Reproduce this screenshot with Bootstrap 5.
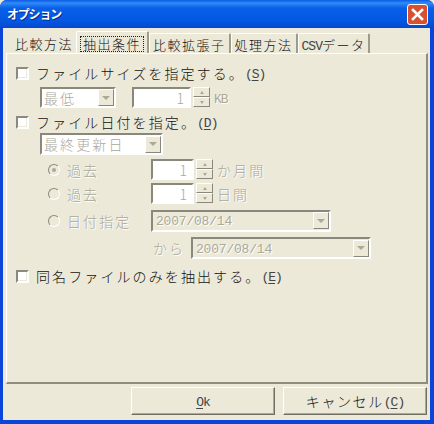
<!DOCTYPE html>
<html lang="ja">
<head>
  <meta charset="UTF-8" />
  <title>オプション</title>
  <link href="https://cdn.jsdelivr.net/npm/bootstrap@5.3.0/dist/css/bootstrap.min.css" rel="stylesheet">
  <style>
    html, body { width: 434px; height: 424px; overflow: hidden; }
    body { background: #ece9d8; font-family: "Noto Sans CJK JP", "Liberation Sans", sans-serif; font-size: 14px; line-height: 16px; color: #111; font-weight: 300; }
    .win { width: 434px; height: 424px; background: #0a44d8; border-radius: 7px 7px 0 0; padding: 0 4px 4px 3px; }
    .win-title { height: 28px; margin: 0 -4px 0 -3px; padding: 0 6px 0 7px; background: linear-gradient(#0a5ae6 0, #2f8cf5 3px, #0a5fe8 8px, #0256e0 22px, #0a45cc 28px); border-radius: 7px 7px 0 0; color: #fff; font-weight: 700; font-size: 12px; letter-spacing: -1.2px; text-shadow: 1px 1px 0 #0a2a90; }
    .win-close { width: 21px; height: 21px; border: 1px solid #fff; border-radius: 3px; background: #d9502e; }
    .win-body { background: #ece9d8; height: 392px; padding: 5px 2px 0 3px; }
    .tab-row { height: 20px; padding-left: 6px; position: relative; z-index: 1; }
    .tab-item { height: 20px; padding: 3px 3px 0 3px; letter-spacing: 1.5px; border-right: 2px solid #9d9b8e; border-top: 1px solid #fff; border-left: 1px solid #fff; white-space: nowrap; border-radius: 2px 2px 0 0; font-size: 13px; }
    .tab-item.first { border: 0; }
    .tab-item.on { height: 22px; margin-top: -2px; padding-top: 4px; background: #ece9d8; position: relative; z-index: 2; }
    .tab-focus { border: 1px dotted #222; padding: 0 2px; display: block; height: 16px; line-height: 14px; }
    .tab-panel { height: 331px; border-top: 1px solid #fff; border-left: 1px solid #fff; border-right: 2px solid #8f8d80; border-bottom: 2px solid #8f8d80; padding: 11px 0 0 9px; }
    .line { letter-spacing: 2.1px; white-space: nowrap; }
    .chk-line { height: 16px; }
    .half { font-family: "Liberation Mono", monospace; font-size: 13px; letter-spacing: -1px; font-weight: 400; padding-top: 4px; color: #444; }
    .off .half { color: #aca899; }
    .date-text { font-family: "Liberation Mono", monospace; font-size: 13px; letter-spacing: -.2px; font-weight: 400; padding-left: 3px; padding-top: 3px; }
    .cb { width: 13px; height: 13px; border: 2px solid; border-color: #8c8a7f #fff #fff #8c8a7f; background: #fff; box-shadow: inset -1px -1px 0 #ece9d8; margin-right: 7px; flex: none; }
    .off { color: #aca899; text-shadow: 1px 1px 0 #fff; }
    .field { height: 21px; border: 2px solid; border-color: #8a887c #fff #fff #8a887c; background: #fff; }
    .field.gray { background: #ece9d8; }
    .combo-btn { width: 16px; height: 17px; background: #ece9d8; border: 1px solid; border-color: #fff #8a887c #8a887c #fff; flex: none; }
    .tri { width: 0; height: 0; border: 4px solid transparent; border-top: 4px solid #aca899; border-bottom: 0; }
    .tri.up { border-top: 0; border-bottom: 3px solid #aca899; border-left-width: 2px; border-right-width: 2px; }
    .tri.dn { border-top-width: 3px; border-left-width: 2px; border-right-width: 2px; }
    .spin { width: 17px; height: 21px; margin-left: 2px; flex: none; }
    .spin-btn { height: 10px; background: #ece9d8; border: 1px solid; border-color: #fff #8a887c #8a887c #fff; }
    .radio-dot { width: 12px; height: 12px; border-radius: 50%; border: 1px solid; border-color: #8a887c #fff #fff #8a887c; margin-right: 7px; flex: none; }
    .radio-dot i { width: 4px; height: 4px; border-radius: 50%; background: #aca899; display: block; }
    .row-size { margin: 6px 0 0 24px; height: 21px; }
    .row-spin { margin-left: 32px; height: 21px; }
    .win-foot { padding: 3px 1px 0 0; }
    .push { width: 144px; height: 28px; border: 1px solid; border-color: #fff #716f64 #716f64 #fff; box-shadow: inset -1px -1px 0 #aca899; letter-spacing: 1.6px; }
    u { text-underline-offset: 2px; }
  </style>
</head>
<body>
  <div class="win">
    <div class="win-title d-flex align-items-center justify-content-between">
      <span>オプション</span>
      <span class="win-close d-flex align-items-center justify-content-center">
        <svg width="13" height="13" viewBox="0 0 13 13"><path d="M2 2 11 11M11 2 2 11" stroke="#fff" stroke-width="2.6" stroke-linecap="square" /></svg>
      </span>
    </div>
    <div class="win-body">
      <div class="tab-row d-flex">
        <div class="tab-item first">比較方法</div>
        <div class="tab-item on"><span class="tab-focus">抽出条件</span></div>
        <div class="tab-item">比較拡張子</div>
        <div class="tab-item">処理方法</div>
        <div class="tab-item"><span class="half">CSV</span>データ</div>
      </div>
      <div class="tab-panel">
        <div class="line chk-line d-flex align-items-center"><span class="cb"></span>ファイルサイズを指定する。<span class="half">(<u>S</u>)</span></div>

        <div class="row-size d-flex off line">
          <div class="field d-flex align-items-center justify-content-between" style="width:76px">
            <span style="padding-left:2px">最低</span><span class="combo-btn d-flex align-items-center justify-content-center"><i class="tri"></i></span>
          </div>
          <div class="field d-flex align-items-center justify-content-end ms-3" style="width:59px;padding-right:3px">1</div>
          <div class="spin">
            <div class="spin-btn d-flex align-items-center justify-content-center"><i class="tri up"></i></div>
            <div class="spin-btn d-flex align-items-center justify-content-center"><i class="tri dn"></i></div>
          </div>
          <span class="half ms-1 d-flex align-items-center">KB</span>
        </div>

        <div class="line chk-line d-flex align-items-center" style="margin-top:6px"><span class="cb"></span>ファイル日付を指定。<span class="half">(<u>D</u>)</span></div>

        <div class="d-flex off line" style="margin:3px 0 0 24px">
          <div class="field d-flex align-items-center justify-content-between" style="width:123px;height:22px">
            <span style="padding-left:2px">最終更新日</span><span class="combo-btn d-flex align-items-center justify-content-center"><i class="tri"></i></span>
          </div>
        </div>

        <div class="row-spin d-flex align-items-center off line" style="margin-top:4px">
          <span class="radio-dot d-flex align-items-center justify-content-center"><i></i></span><span style="width:84px">過去</span>
          <div class="field d-flex align-items-center justify-content-end" style="width:43px;padding-right:3px">1</div>
          <div class="spin">
            <div class="spin-btn d-flex align-items-center justify-content-center"><i class="tri up"></i></div>
            <div class="spin-btn d-flex align-items-center justify-content-center"><i class="tri dn"></i></div>
          </div>
          <span class="ms-1">か月間</span>
        </div>

        <div class="row-spin d-flex align-items-center off line" style="margin-top:3px">
          <span class="radio-dot"></span><span style="width:84px">過去</span>
          <div class="field d-flex align-items-center justify-content-end" style="width:43px;padding-right:3px">1</div>
          <div class="spin">
            <div class="spin-btn d-flex align-items-center justify-content-center"><i class="tri up"></i></div>
            <div class="spin-btn d-flex align-items-center justify-content-center"><i class="tri dn"></i></div>
          </div>
          <span class="ms-1">日間</span>
        </div>

        <div class="row-spin d-flex align-items-center off line" style="margin-top:6px">
          <span class="radio-dot"></span><span style="width:84px">日付指定</span>
          <div class="field gray d-flex align-items-center justify-content-between" style="width:180px;height:22px">
            <span class="date-text">2007/08/14</span><span class="combo-btn d-flex align-items-center justify-content-center"><i class="tri"></i></span>
          </div>
        </div>

        <div class="d-flex align-items-center off line" style="margin:6px 0 0 137px">
          <span style="width:38px">から</span>
          <div class="field gray d-flex align-items-center justify-content-between" style="width:180px;height:22px">
            <span class="date-text">2007/08/14</span><span class="combo-btn d-flex align-items-center justify-content-center"><i class="tri"></i></span>
          </div>
        </div>

        <div class="line chk-line d-flex align-items-center" style="margin-top:9px"><span class="cb"></span>同名ファイルのみを抽出する。<span class="half">(<u>E</u>)</span></div>
      </div>
      <div class="win-foot d-flex justify-content-end gap-2">
        <div class="push d-flex align-items-center justify-content-center"><span class="half"><u>O</u>k</span></div>
        <div class="push d-flex align-items-center justify-content-center">キャンセル<span class="half">(<u>C</u>)</span></div>
      </div>
    </div>
  </div>
  <script src="https://cdn.jsdelivr.net/npm/bootstrap@5.3.0/dist/js/bootstrap.bundle.min.js"></script>
</body>
</html>
